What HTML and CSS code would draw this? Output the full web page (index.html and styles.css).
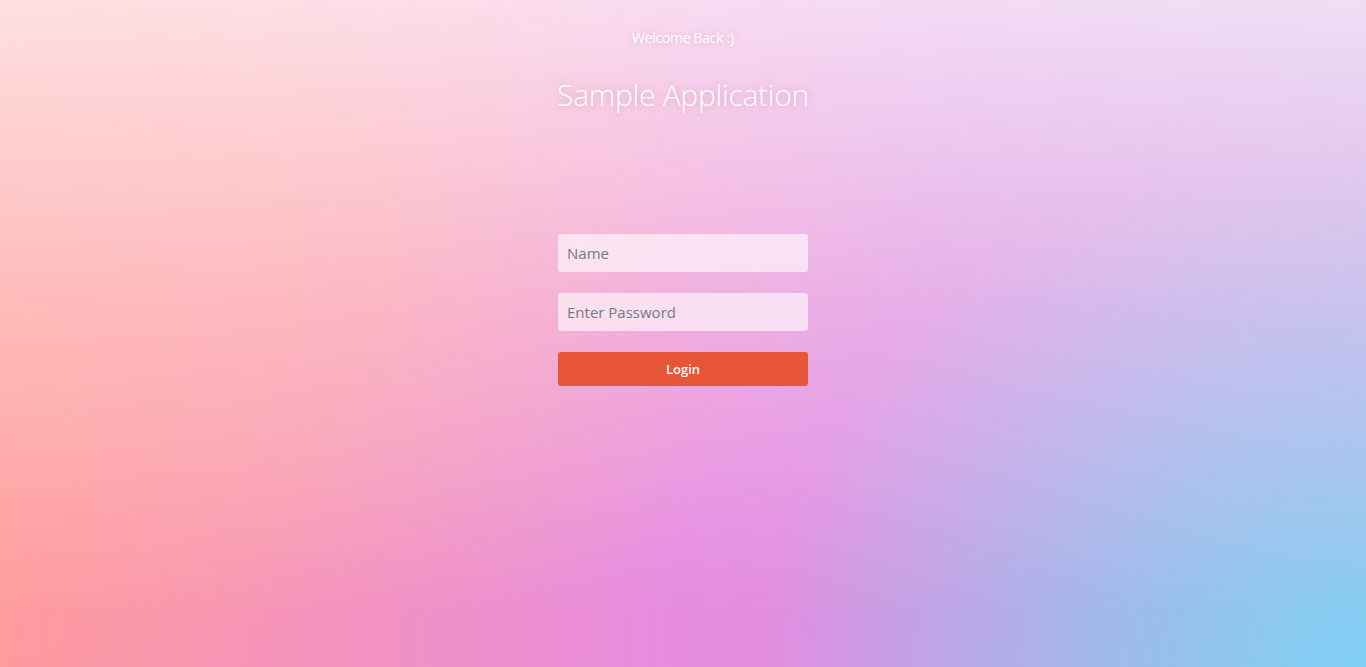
FILE: index.html
```html
<!DOCTYPE html>
<html lang="en">
<head>
<meta charset="utf-8">
<title>Sample Application</title>
<link rel="stylesheet" href="styles.css">
</head>
<body>
<main class="page">
  <header class="hero">
    <p class="welcome">Welcome Back :)</p>
    <h1 class="title">Sample Application</h1>
  </header>
  <form class="login">
    <input class="field" type="text" placeholder="Name">
    <input class="field" type="password" placeholder="Enter Password">
    <button class="btn" type="button">Login</button>
  </form>
</main>
</body>
</html>
```
FILE: styles.css
```css
html, body {
  margin: 0;
  height: 100%;
}
body {
  font-family: "Open Sans", "Noto Sans", sans-serif;
  background:
    linear-gradient(to bottom, rgba(255, 255, 255, 0.68) 0%, rgba(255, 255, 255, 0.28) 46%, rgba(255, 255, 255, 0) 92%),
    radial-gradient(ellipse 44% 78% at 100% 100%, #7fd1f3 0%, rgba(127, 209, 243, 0.6) 45%, rgba(127, 209, 243, 0) 100%),
    radial-gradient(ellipse 50% 70% at 18% 25%, rgba(255, 160, 160, 0.75) 0%, rgba(255, 160, 165, 0.35) 55%, rgba(255, 160, 165, 0) 100%),
    radial-gradient(ellipse 38% 55% at 0% 48%, rgba(255, 165, 150, 0.6) 0%, rgba(255, 165, 150, 0) 100%),
    linear-gradient(to right, #ff9a9e 0%, #e68be0 50%, #cc98e0 100%);
  overflow: hidden;
}
.page {
  display: flex;
  flex-direction: column;
  align-items: center;
  height: 100%;
}
.hero {
  display: flex;
  flex-direction: column;
  align-items: center;
  padding-top: 28px;
}
.welcome {
  margin: 0;
  color: #fff;
  font-size: 14px;
  font-weight: 400;
  letter-spacing: -0.3px;
  text-shadow: 0 0 6px rgba(180, 120, 150, 0.35);
}
.title {
  margin: 27px 0 0;
  color: #fff;
  font-size: 30px;
  font-weight: 300;
  letter-spacing: -0.3px;
  text-shadow: 0 0 8px rgba(170, 110, 140, 0.45);
}
.login {
  display: flex;
  flex-direction: column;
  width: 250px;
  margin-top: 119px;
  gap: 21px;
}
.field {
  box-sizing: border-box;
  height: 38px;
  border: none;
  border-radius: 3px;
  background: rgba(255, 255, 255, 0.6);
  padding: 0 9px;
  font-family: "Open Sans", "Noto Sans", sans-serif;
  font-size: 15px;
  color: #555;
  outline: none;
}
.field::placeholder {
  color: #737a85;
}
.btn {
  height: 34px;
  border: none;
  border-radius: 3px;
  background: #e85536;
  color: #fff;
  font-family: "Open Sans", "Noto Sans", sans-serif;
  font-size: 13px;
  font-weight: 600;
  cursor: pointer;
}
```
